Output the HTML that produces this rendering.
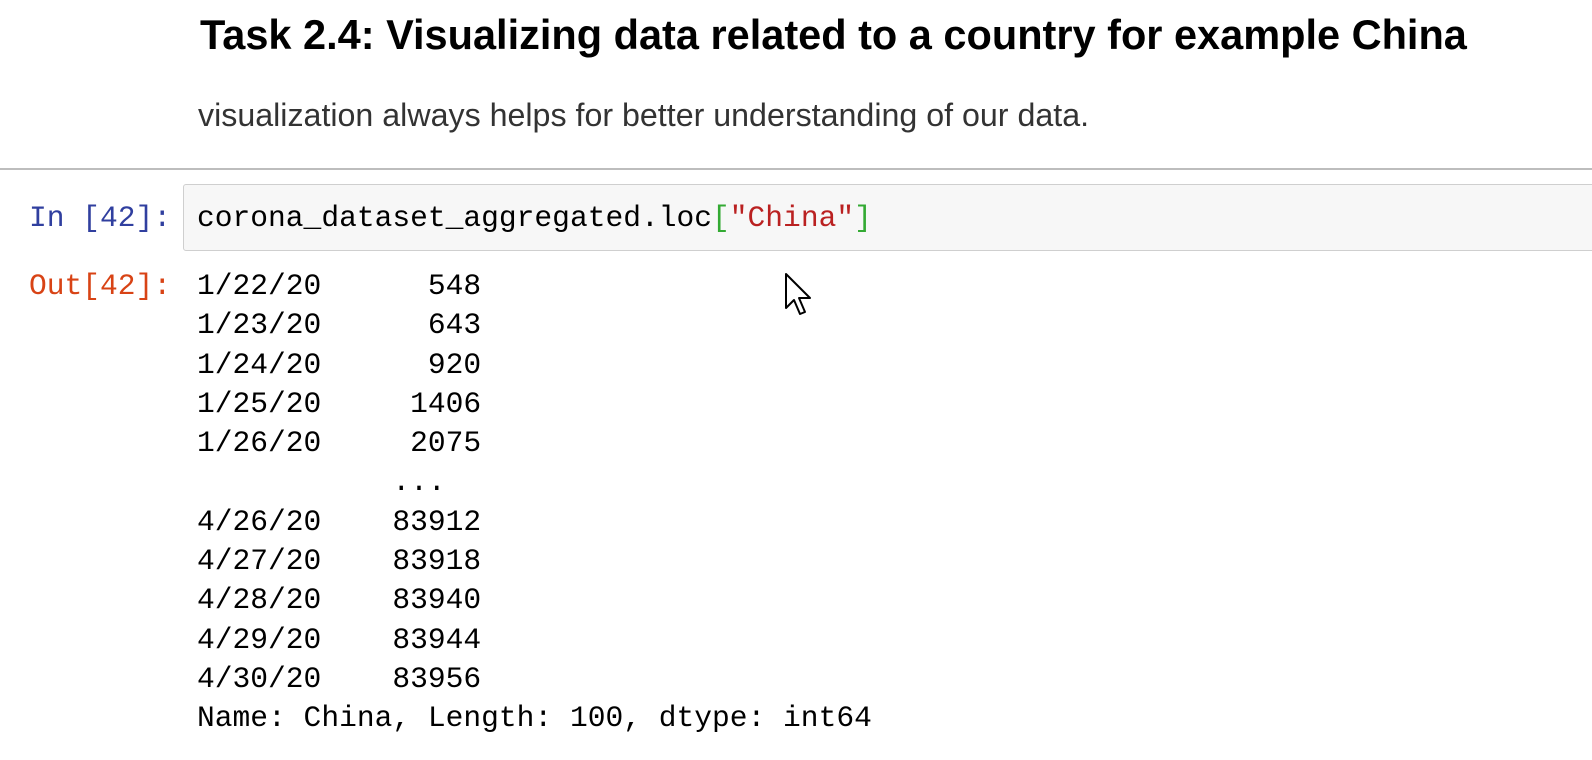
<!DOCTYPE html>
<html><head><style>
body{margin:0;width:1592px;height:760px;background:#fff;position:relative;overflow:hidden;font-family:"Liberation Sans",sans-serif}
.a{position:absolute;white-space:pre}
h1{position:absolute;left:200px;top:11px;margin:0;font-size:41.5px;font-weight:bold;color:#000;white-space:nowrap}
.p{left:198px;top:97px;font-size:32.2px;color:#333}
.hr{position:absolute;left:0;top:168px;width:1592px;height:2px;background:#bdbdbd}
.box{position:absolute;left:183px;top:184px;width:1420px;height:65px;background:#f7f7f7;border:1px solid #cfcfcf;border-radius:3px}
.m{font-family:"Liberation Mono",monospace;font-size:29.6px;line-height:39.3px}
</style></head><body>
<h1>Task 2.4: Visualizing data related to a country for example China</h1>
<div class="a p">visualization always helps for better understanding of our data.</div>
<div class="hr"></div>
<div class="box"></div>
<div class="a m" style="left:29px;top:199px;color:#303f9f">In [42]:</div>
<div class="a m" style="left:197px;top:199px;color:#000">corona_dataset_aggregated.loc<span style="color:#3a3">[</span><span style="color:#ba2121">"China"</span><span style="color:#3a3">]</span></div>
<div class="a m" style="left:29px;top:267px;color:#d84315">Out[42]:</div>
<div class="a m" style="left:197px;top:267px;color:#000">1/22/20      548
1/23/20      643
1/24/20      920
1/25/20     1406
1/26/20     2075
           ...  
4/26/20    83912
4/27/20    83918
4/28/20    83940
4/29/20    83944
4/30/20    83956
Name: China, Length: 100, dtype: int64</div>
<svg class="a" style="left:784px;top:272px" width="30" height="46" viewBox="0 0 30 46"><path d="M2 2 L2 36 L10 28 L16 42 L21 40 L15 26 L26 26 Z" fill="#fff" stroke="#000" stroke-width="2" stroke-linejoin="round"/></svg>
</body></html>
